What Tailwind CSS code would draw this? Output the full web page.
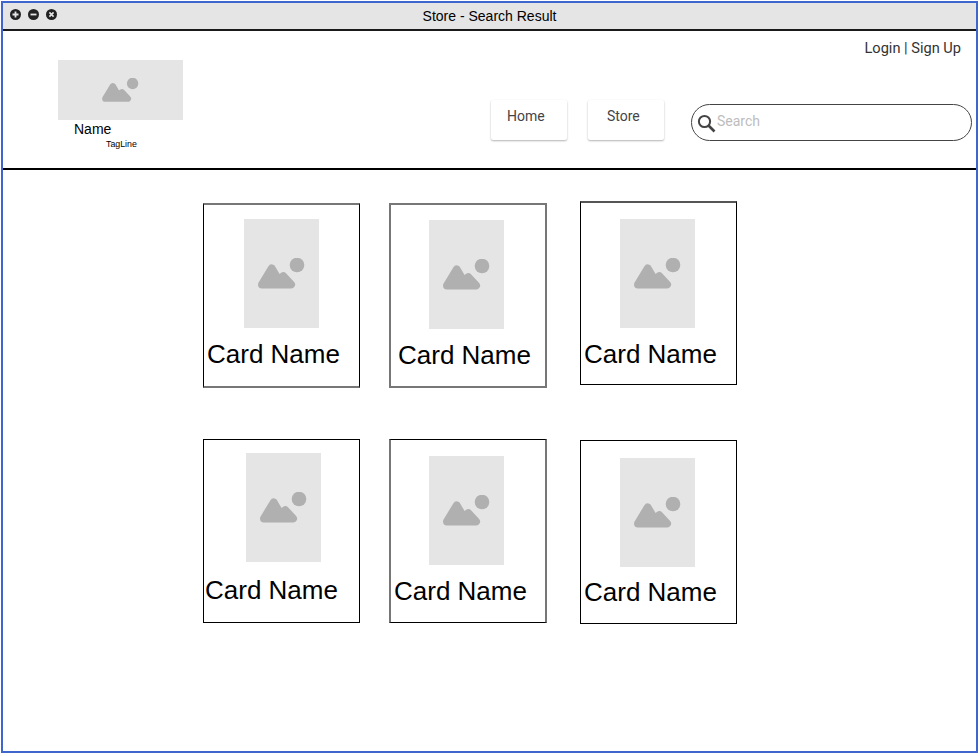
<!DOCTYPE html>
<html lang="en">
<head>
  <meta charset="UTF-8" />
  <title>Store - Search Result</title>
  <script src="https://cdn.jsdelivr.net/npm/@tailwindcss/browser@4"></script>
</head>
<body class="bg-white font-['Liberation_Sans',Arial,sans-serif] text-black">

  <svg class="hidden">
    <symbol id="picture" viewBox="0 0 47 32">
      <circle cx="39" cy="7" r="7.3" fill="#b0b0b0" />
      <polygon points="4,26.5 13.7,10.5 20.5,22 25.3,18.2 33,26.5" fill="#b0b0b0" stroke="#b0b0b0" stroke-width="8" stroke-linejoin="round" />
    </symbol>
  </svg>

  <div class="ml-px mt-px w-[977px] h-[752px] border-2 border-[#3f66cc] overflow-hidden">

    <!-- title bar -->
    <div class="relative h-[28px] bg-[#e5e5e5] border-b-2 border-[#1a1a1a] flex items-center justify-center text-[14px] leading-none">
      <div class="absolute left-[7px] top-[6px] flex gap-[7px]">
        <svg class="w-[11px] h-[11px]" viewBox="0 0 11 11"><circle cx="5.5" cy="5.5" r="5.5" fill="#222" /><path d="M5.5 2.5v6M2.5 5.5h6" stroke="#e5e5e5" stroke-width="1.8" /></svg>
        <svg class="w-[11px] h-[11px]" viewBox="0 0 11 11"><circle cx="5.5" cy="5.5" r="5.5" fill="#222" /><path d="M2.5 5.5h6" stroke="#e5e5e5" stroke-width="1.8" /></svg>
        <svg class="w-[11px] h-[11px]" viewBox="0 0 11 11"><circle cx="5.5" cy="5.5" r="5.5" fill="#222" /><path d="M3.4 3.4l4.2 4.2M7.6 3.4l-4.2 4.2" stroke="#e5e5e5" stroke-width="1.6" /></svg>
      </div>
      <span class="-mt-[1px]">Store - Search Result</span>
    </div>

    <!-- header -->
    <div class="relative h-[139px] border-b-2 border-black">
      <div class="absolute right-[15px] top-[9px] font-['Roboto',sans-serif] text-[14.6px] leading-[16px] text-[#333]">Login | Sign Up</div>
      <div class="flex h-full">
        <div class="ml-[55px] mt-[29px] w-[125px]">
          <div class="h-[60px] bg-[#e5e5e5] flex items-center justify-center">
            <svg class="w-[37px] h-[25px]"><use href="#picture" /></svg>
          </div>
          <div class="ml-[16px] mt-[1px] text-[14px] leading-[16px]">Name</div>
          <div class="ml-[48px] mt-[1px] text-[8.8px] leading-[12px]">TagLine</div>
        </div>
        <div class="ml-[308px] mt-[69px] flex gap-[21px] font-['Roboto',sans-serif] text-[14px] text-[#444]">
          <div class="w-[76px] h-[40px] rounded-[2px] bg-white shadow-[0_1px_2px_rgba(0,0,0,0.3)] pl-[16px] pt-[8px] leading-[16px]">Home</div>
          <div class="w-[76px] h-[40px] rounded-[2px] bg-white shadow-[0_1px_2px_rgba(0,0,0,0.3)] pl-[19px] pt-[8px] leading-[16px]">Store</div>
        </div>
        <div class="ml-[27px] mt-[73px] w-[281px] h-[37px] rounded-full border border-[#444] flex items-center pl-[5px]">
          <svg class="w-[19px] h-[19px] shrink-0 mt-[2px]" viewBox="0 0 19 19" fill="none" stroke="#444"><circle cx="7.5" cy="7.5" r="5.6" stroke-width="2" /><path d="M11.5 11.5l6 6" stroke-width="2.6" /></svg>
          <input placeholder="Search" class="ml-px -mt-[2px] w-[240px] font-['Roboto',sans-serif] text-[14px] outline-none placeholder:text-[#bdbdbd]" />
        </div>
      </div>
    </div>

    <!-- cards -->
    <div class="pl-[200px] pt-[31px]">
      <div class="flex items-start">
        <div class="mt-[2px] w-[157px] h-[185px] border-x border-x-black border-y-2 border-y-[#777]">
          <div class="ml-[40px] mt-[14px] w-[75px] h-[109px] bg-[#e5e5e5] flex items-center justify-center"><svg class="w-[47px] h-[32px]"><use href="#picture" /></svg></div>
          <div class="ml-[3px] mt-[11px] text-[26px] leading-[30px]">Card Name</div>
        </div>
        <div class="ml-[29px] mt-[2px] w-[158px] h-[185px] border-2 border-[#777]">
          <div class="ml-[38px] mt-[15px] w-[75px] h-[109px] bg-[#e5e5e5] flex items-center justify-center"><svg class="w-[47px] h-[32px]"><use href="#picture" /></svg></div>
          <div class="ml-[7px] mt-[11px] text-[26px] leading-[30px]">Card Name</div>
        </div>
        <div class="ml-[33px] w-[157px] h-[184px] border-x border-b border-black border-t-2 border-t-[#555]">
          <div class="ml-[39px] mt-[16px] w-[75px] h-[109px] bg-[#e5e5e5] flex items-center justify-center"><svg class="w-[47px] h-[32px]"><use href="#picture" /></svg></div>
          <div class="ml-[3px] mt-[11px] text-[26px] leading-[30px]">Card Name</div>
        </div>
      </div>
      <div class="flex items-start mt-[51px]">
        <div class="w-[157px] h-[184px] border border-black">
          <div class="ml-[42px] mt-[13px] w-[75px] h-[109px] bg-[#e5e5e5] flex items-center justify-center"><svg class="w-[47px] h-[32px]"><use href="#picture" /></svg></div>
          <div class="ml-[1px] mt-[13px] text-[26px] leading-[30px]">Card Name</div>
        </div>
        <div class="ml-[29px] w-[158px] h-[184px] border-y border-y-black border-x-2 border-x-[#777]">
          <div class="ml-[38px] mt-[16px] w-[75px] h-[109px] bg-[#e5e5e5] flex items-center justify-center"><svg class="w-[47px] h-[32px]"><use href="#picture" /></svg></div>
          <div class="ml-[3px] mt-[11px] text-[26px] leading-[30px]">Card Name</div>
        </div>
        <div class="ml-[33px] mt-px w-[157px] h-[184px] border border-black">
          <div class="ml-[39px] mt-[17px] w-[75px] h-[109px] bg-[#e5e5e5] flex items-center justify-center"><svg class="w-[47px] h-[32px]"><use href="#picture" /></svg></div>
          <div class="ml-[3px] mt-[10px] text-[26px] leading-[30px]">Card Name</div>
        </div>
      </div>
    </div>
  </div>
</body>
</html>
